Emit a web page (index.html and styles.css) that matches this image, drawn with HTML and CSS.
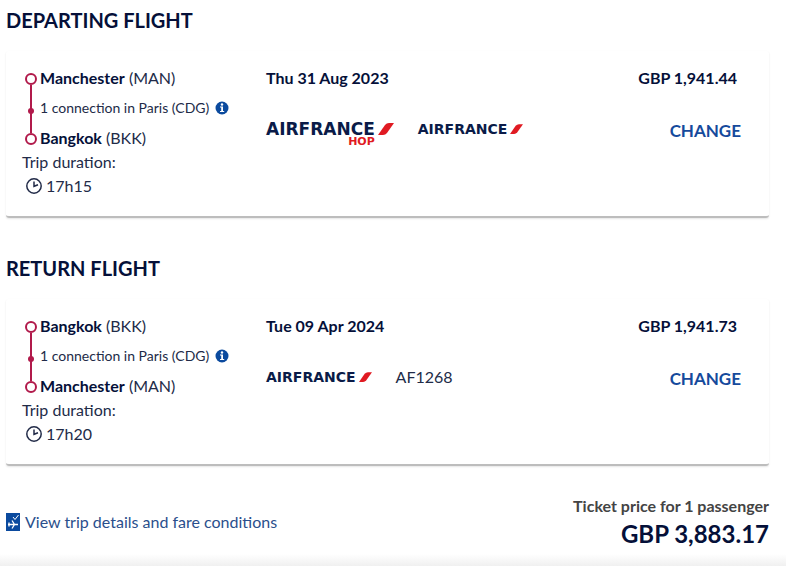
FILE: index.html
```html
<!DOCTYPE html>
<html lang="en">
<head>
    <meta charset="UTF-8">
    <meta name="viewport" content="width=device-width, initial-scale=1.0">
    <title>Your flights</title>
    <link rel="stylesheet" href="styles.css">
</head>
<body>
    <main class="page">
        <section class="flight">
            <h2>DEPARTING FLIGHT</h2>
            <div class="card">
                <div class="trip">
                    <div class="route">
                        <svg class="route-line" viewBox="0 0 12 72" aria-hidden="true">
                            <path d="M6 12V60" stroke="#b11a4b" stroke-width="2"/>
                            <circle cx="6" cy="6" r="5" fill="#fff" stroke="#b11a4b" stroke-width="2"/>
                            <circle cx="6" cy="38" r="3" fill="#b11a4b"/>
                            <circle cx="6" cy="66" r="5" fill="#fff" stroke="#b11a4b" stroke-width="2"/>
                        </svg>
                        <ul class="stops">
                            <li><b>Manchester</b> (MAN)</li>
                            <li class="connection">1 connection in Paris (CDG)
                                <button class="info" type="button" aria-label="Connection details">
                                    <svg viewBox="0 0 14 14"><circle cx="7" cy="7" r="6.5" fill="#0b4a9e"/><path d="M5 5.500H8V10H9.200V11H5V10H6.200V6.500H5Z" fill="#fff"/><circle cx="7" cy="3.500" r="1.200" fill="#fff"/></svg>
                                </button>
                            </li>
                            <li><b>Bangkok</b> (BKK)</li>
                        </ul>
                    </div>
                    <div class="duration">
                        <div>Trip duration:</div>
                        <div class="time">
                            <svg viewBox="0 0 16 16" aria-hidden="true"><circle cx="8" cy="8" r="7.2"/><path d="M8 3.5V8.3L12 6.8"/></svg>
                            17h15
                        </div>
                    </div>
                </div>
                <div class="details">
                    <div class="date">Thu 31 Aug 2023</div>
                    <div class="airlines">
                        <div class="logo logo-hop">
                            <div class="logo-text"><span>AIRFRANCE</span><small>HOP</small></div>
                            <svg viewBox="0 0 16 12" aria-hidden="true"><path d="M0 12L7 2Q8.500 0 11 0H16L9 10Q7.500 12 5 12Z" fill="#e01a22"/></svg>
                        </div>
                        <div class="logo">
                            <div class="logo-text"><span>AIRFRANCE</span></div>
                            <svg viewBox="0 0 16 12" aria-hidden="true"><path d="M0 12L7 2Q8.500 0 11 0H16L9 10Q7.500 12 5 12Z" fill="#e01a22"/></svg>
                        </div>
                    </div>
                </div>
                <div class="fare">
                    <div class="price">GBP 1,941.44</div>
                    <button class="change" type="button">CHANGE</button>
                </div>
            </div>
        </section>

        <section class="flight">
            <h2>RETURN FLIGHT</h2>
            <div class="card">
                <div class="trip">
                    <div class="route">
                        <svg class="route-line" viewBox="0 0 12 72" aria-hidden="true">
                            <path d="M6 12V60" stroke="#b11a4b" stroke-width="2"/>
                            <circle cx="6" cy="6" r="5" fill="#fff" stroke="#b11a4b" stroke-width="2"/>
                            <circle cx="6" cy="38" r="3" fill="#b11a4b"/>
                            <circle cx="6" cy="66" r="5" fill="#fff" stroke="#b11a4b" stroke-width="2"/>
                        </svg>
                        <ul class="stops">
                            <li><b>Bangkok</b> (BKK)</li>
                            <li class="connection">1 connection in Paris (CDG)
                                <button class="info" type="button" aria-label="Connection details">
                                    <svg viewBox="0 0 14 14"><circle cx="7" cy="7" r="6.5" fill="#0b4a9e"/><path d="M5 5.500H8V10H9.200V11H5V10H6.200V6.500H5Z" fill="#fff"/><circle cx="7" cy="3.500" r="1.200" fill="#fff"/></svg>
                                </button>
                            </li>
                            <li><b>Manchester</b> (MAN)</li>
                        </ul>
                    </div>
                    <div class="duration">
                        <div>Trip duration:</div>
                        <div class="time">
                            <svg viewBox="0 0 16 16" aria-hidden="true"><circle cx="8" cy="8" r="7.2"/><path d="M8 3.5V8.3L12 6.8"/></svg>
                            17h20
                        </div>
                    </div>
                </div>
                <div class="details">
                    <div class="date">Tue 09 Apr 2024</div>
                    <div class="airlines">
                        <div class="logo">
                            <div class="logo-text"><span>AIRFRANCE</span></div>
                            <svg viewBox="0 0 16 12" aria-hidden="true"><path d="M0 12L7 2Q8.500 0 11 0H16L9 10Q7.500 12 5 12Z" fill="#e01a22"/></svg>
                        </div>
                        <span>AF1268</span>
                    </div>
                </div>
                <div class="fare">
                    <div class="price">GBP 1,941.73</div>
                    <button class="change" type="button">CHANGE</button>
                </div>
            </div>
        </section>

        <div class="summary">
            <a class="conditions" href="#">
                <svg viewBox="0 0 14 18" aria-hidden="true"><path d="M0 0H14V18H0Z" fill="#0b4a9e"/><path d="M7 4L9 6.500L12.500 2" fill="none" stroke="#fff"/><path d="M2 11.500H12M3 9.500V13.500M6 7.500L8.500 11.500L6 15.500" fill="none" stroke="#fff" stroke-width="1.300"/></svg>
                View trip details and fare conditions
            </a>
            <div class="total">
                <div class="total-label">Ticket price for 1 passenger</div>
                <div class="total-price">GBP 3,883.17</div>
            </div>
        </div>
    </main>
    <div class="bottom-shade"></div>
</body>
</html>
```
FILE: styles.css
```css
* {
    box-sizing: border-box;
}
body {
    font-family: Lato, 'Open Sans', sans-serif;
    font-size: 16px;
    line-height: 24px;
    color: #222b48;
    background: #fff;
    margin: 0;
    min-height: 100vh;
    display: flex;
    flex-direction: column;
}
.page {
    flex: 1;
    padding: 8px 17px 0 6px;
}
.flight {
    margin-bottom: 38px;
}
h2 {
    color: #051039;
    font-size: 20px;
    font-weight: bold;
    line-height: 24px;
    margin: 0 0 19px;
}
.card {
    display: grid;
    grid-template-columns: 244px 1fr auto;
    padding: 15px 28px 18px 16px;
    border-bottom: 2px solid #bdbdbd;
    border-radius: 3px;
    box-shadow: 0 1px 2px rgba(0, 0, 0, 0.1);
}
.route {
    display: flex;
    gap: 3px;
    padding-left: 3px;
}
.route-line {
    width: 12px;
    height: 72px;
    margin-top: 7px;
}
.stops {
    display: flex;
    flex-direction: column;
    gap: 6px;
    list-style: none;
    margin: 0;
    padding: 0;
}
.stops b,
.date,
.price {
    color: #051039;
    font-weight: bold;
}
.connection {
    display: flex;
    align-items: center;
    gap: 6px;
    font-size: 14px;
}
button {
    font-family: inherit;
    border: none;
    background: none;
    padding: 0;
    cursor: pointer;
}
.info {
    display: flex;
}
.info svg {
    width: 14px;
    height: 14px;
}
.time {
    display: flex;
    align-items: center;
    gap: 4px;
    padding-left: 4px;
}
.time svg {
    width: 16px;
    height: 16px;
    fill: none;
    stroke: #222b48;
    stroke-width: 1.5;
}
.airlines {
    display: flex;
    align-items: center;
    gap: 24px;
    height: 24px;
    margin-top: 27px;
}
.logo {
    display: flex;
    align-items: center;
    gap: 3px;
    color: #0a1b48;
    font-family: 'DejaVu Sans', sans-serif;
    font-size: 14px;
    font-weight: bold;
    line-height: 16px;
}
.logo svg {
    width: 13px;
    height: 10px;
}
.logo-text {
    position: relative;
}
.logo-hop {
    font-size: 17px;
}
.logo-hop svg {
    width: 16px;
    height: 12px;
}
.logo-hop small {
    position: absolute;
    right: 0;
    top: 15px;
    color: #e01a22;
    font-size: 11px;
    line-height: 12px;
}
.fare {
    display: flex;
    flex-direction: column;
    align-items: flex-end;
    gap: 29px;
}
.price {
    padding-right: 4px;
}
.change {
    color: #154a9c;
    font-size: 17px;
    font-weight: bold;
    line-height: 24px;
}
.summary {
    display: flex;
    justify-content: space-between;
    align-items: flex-start;
    margin-top: -10px;
}
.conditions {
    display: flex;
    align-items: center;
    gap: 5px;
    color: #2a4f8c;
    text-decoration: none;
    margin-top: 16px;
}
.conditions svg {
    width: 14px;
    height: 18px;
}
.total {
    text-align: right;
    font-weight: bold;
}
.total-label {
    color: #444;
}
.total-price {
    color: #051039;
    font-size: 24px;
    line-height: 32px;
}
.bottom-shade {
    height: 12px;
    background: linear-gradient(#fff, #f0f0f0);
}
```
